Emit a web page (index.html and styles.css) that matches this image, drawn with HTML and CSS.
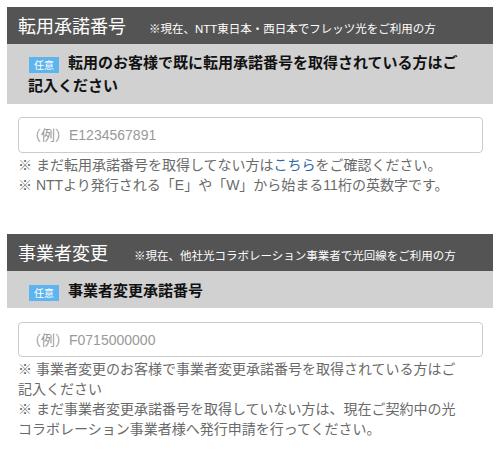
FILE: index.html
```html
<!DOCTYPE html>
<html lang="ja">
<head>
<meta charset="utf-8">
<link rel="stylesheet" href="styles.css">
</head>
<body>
<div class="page">
  <section class="block">
    <div class="head"><span class="head-title">転用承諾番号</span><span class="head-sub">※現在、NTT東日本・西日本でフレッツ光をご利用の方</span></div>
    <div class="band"><span class="badge">任意</span><span class="band-text">転用のお客様で既に転用承諾番号を取得されている方はご</span><br><span class="band-text">記入ください</span></div>
    <input class="field" type="text" placeholder="（例）E1234567891">
    <div class="notes">
      <p>※ まだ転用承諾番号を取得してない方は<a href="#" class="link">こちら</a>をご確認ください。</p>
      <p>※ NTTより発行される「E」や「W」から始まる11桁の英数字です。</p>
    </div>
  </section>
  <section class="block block-second">
    <div class="head"><span class="head-title">事業者変更</span><span class="head-sub">※現在、他社光コラボレーション事業者で光回線をご利用の方</span></div>
    <div class="band band-single"><span class="badge">任意</span><span class="band-text">事業者変更承諾番号</span></div>
    <input class="field field-second" type="text" placeholder="（例）F0715000000">
    <div class="notes">
      <p>※ 事業者変更のお客様で事業者変更承諾番号を取得されている方はご<br>記入ください</p>
      <p>※ まだ事業者変更承諾番号を取得していない方は、現在ご契約中の光<br>コラボレーション事業者様へ発行申請を行ってください。</p>
    </div>
  </section>
</div>
</body>
</html>
```

FILE: styles.css
```css
html, body {
  margin: 0;
  padding: 0;
  background: #ffffff;
}
body {
  font-family: "Liberation Sans", "Noto Sans CJK JP", sans-serif;
  color: #222;
}
.page {
  padding: 7px 7px 0 7px;
}
.block {
  display: flex;
  flex-direction: column;
}
.block-second {
  margin-top: 39px;
}
.head {
  height: 37px;
  line-height: 37px;
  background: #545454;
  color: #ffffff;
  padding: 0 11px;
  white-space: nowrap;
}
.head-title {
  font-size: 18px;
  font-family: "Noto Sans CJK JP", sans-serif;
  font-weight: 400;
}
.head-sub {
  font-size: 11.5px;
  margin-left: 23px;
}
.block-second .head-sub {
  margin-left: 26px;
}
.band {
  background: #d1d1d1;
  padding: 6px 20px 8px 21px;
  font-size: 15px;
  line-height: 23px;
  font-weight: 700;
  color: #111;
  font-family: "Noto Sans CJK JP", sans-serif;
}
.band-single {
  padding-top: 7px;
  padding-bottom: 7px;
}
.badge {
  display: inline-flex;
  align-items: center;
  justify-content: center;
  box-sizing: border-box;
  width: 30px;
  height: 16px;
  line-height: 1;
  background: #5db4ee;
  color: #ffffff;
  font-size: 10px;
  font-weight: 400;
  vertical-align: -1px;
  margin-left: 1px;
  margin-right: 9px;
  overflow: hidden;
}
.field {
  box-sizing: border-box;
  margin: 13px 10px 0 11px;
  height: 36px;
  border: 1px solid #cccccc;
  border-radius: 4px;
  padding: 0 8px;
  font-size: 14px;
  font-family: "Liberation Sans", "Noto Sans CJK JP", sans-serif;
  color: #333;
  background: #fff;
}
.field::placeholder {
  color: #999999;
}
.field-second {
  margin-top: 14px;
  height: 35px;
}
.notes {
  margin: 2px 10px 0 11px;
  font-size: 14px;
  line-height: 20px;
  color: #6a6a6a;
}
.notes p {
  margin: 0;
}
.link {
  color: #2f6aa8;
  text-decoration: none;
}
```
